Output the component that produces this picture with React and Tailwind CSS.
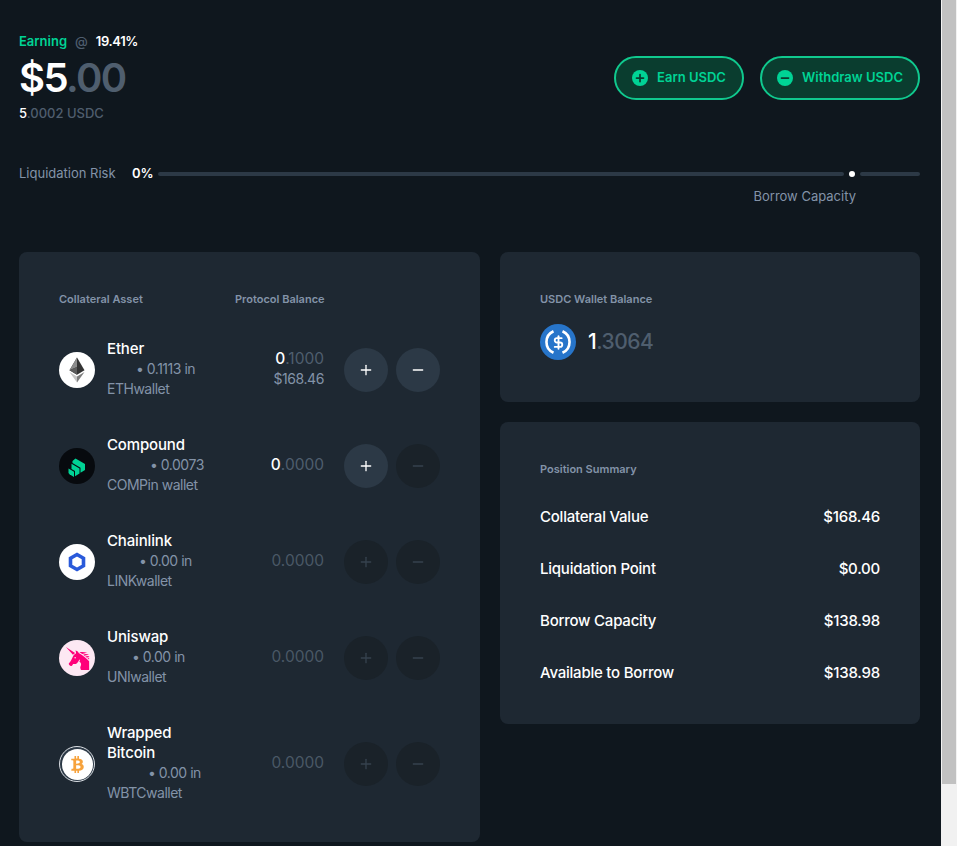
import { Plus, Minus, DollarSign } from 'lucide-react';
import { FaBtc } from 'react-icons/fa';
import { GiUnicorn } from 'react-icons/gi';

function EtherIcon() {
  return (
    <svg viewBox="0 0 36 36" className="h-9 w-9">
      <circle cx="18" cy="18" r="18" fill="#fff" />
      <polygon points="18,5.5 10.5,18.3 18,22.8 25.5,18.3" fill="#343434" />
      <polygon points="18,5.5 10.5,18.3 18,15" fill="#8c8c8c" />
      <polygon points="18,15 10.5,18.3 18,22.8" fill="#5c5c5c" />
      <polygon points="18,24.4 10.5,19.9 18,30.5" fill="#c4c4c4" />
      <polygon points="18,24.4 25.5,19.9 18,30.5" fill="#7d7d7d" />
    </svg>
  );
}

function CompoundIcon() {
  return (
    <svg viewBox="0 0 36 36" className="h-9 w-9">
      <circle cx="18" cy="18" r="18" fill="#070a0e" />
      <g fill="#00d395">
        <polygon points="9.5,20.5 15,23.7 15,29 10.5,26.3 9.5,25" />
        <polygon points="12.5,15.8 20.5,20.5 20.5,25.5 16,28.3 16,23 12.5,21" />
        <polygon points="16.5,10.5 26,16 26,22 21.5,24.8 21.5,19.8 13.5,15 13.5,13" />
      </g>
    </svg>
  );
}

function ChainlinkIcon() {
  return (
    <svg viewBox="0 0 36 36" className="h-9 w-9">
      <circle cx="18" cy="18" r="18" fill="#fff" />
      <polygon points="18,10.5 24.5,14.2 24.5,21.8 18,25.5 11.5,21.8 11.5,14.2" fill="none" stroke="#2a5ada" strokeWidth="3.6" />
    </svg>
  );
}

function UniswapIcon() {
  return (
    <div className="flex h-9 w-9 items-center justify-center rounded-full bg-[#fde8f3]">
      <GiUnicorn className="h-[25px] w-[25px] -scale-x-100 text-[#ff007a]" />
    </div>
  );
}

function WbtcIcon() {
  return (
    <div className="flex h-9 w-9 items-center justify-center rounded-full border border-[#d9dde2] bg-[#2c3946]">
      <div className="flex h-[31px] w-[31px] items-center justify-center rounded-full bg-white">
        <FaBtc className="h-[17px] w-[17px] text-[#f7a23b]" />
      </div>
    </div>
  );
}

function UsdcIcon() {
  return (
    <div className="relative flex h-9 w-9 items-center justify-center rounded-full bg-[#2775ca]">
      <svg viewBox="0 0 36 36" className="absolute inset-0 h-9 w-9" fill="none" stroke="#fff" strokeWidth="2.6">
        <path d="M13.5 7.2a11.8 11.8 0 0 0 0 21.6" />
        <path d="M22.5 7.2a11.8 11.8 0 0 1 0 21.6" />
      </svg>
      <DollarSign className="h-[15px] w-[15px] text-white" strokeWidth={3} />
    </div>
  );
}

function Split({ whole, rest, restClass }) {
  return (
    <>
      <span className="font-medium text-white">{whole}</span>
      <span className={restClass}>{rest}</span>
    </>
  );
}

function RoundButton({ active, children }) {
  return (
    <button className={active
      ? 'flex h-11 w-11 items-center justify-center rounded-full bg-[#2c3946] text-white'
      : 'flex h-11 w-11 items-center justify-center rounded-full bg-[#1a2229] text-[#36424e]'}>
      {children}
    </button>
  );
}

function AssetRow({ icon, name, sub, indent, line3, balance, usd, plus, minus }) {
  return (
    <div className="flex items-center py-[18px]">
      <div className="shrink-0">{icon}</div>
      <div className="-mt-px mb-px ml-3 w-[100px] shrink-0 text-sm leading-5 tracking-[-0.035em] text-[#8393a8]">
        <div className="text-[15px] font-medium tracking-[-0.01em] text-white">{name}</div>
        <div className={`whitespace-nowrap ${indent}`}>• {sub}</div>
        <div className="whitespace-nowrap">{line3}</div>
      </div>
      <div className="-mt-px mb-px w-[117px] text-right text-[15.5px] leading-5">
        {balance}
        {usd && <div className="text-sm tracking-[-0.03em] text-[#8393a8]">{usd}</div>}
      </div>
      <div className="ml-5 flex gap-2">
        <RoundButton active={plus}><Plus className="h-4 w-4" /></RoundButton>
        <RoundButton active={minus}><Minus className="h-4 w-4" /></RoundButton>
      </div>
    </div>
  );
}

function SummaryRow({ label, value }) {
  return (
    <div className="flex h-[52px] items-center justify-between text-[15px] font-medium tracking-[-0.015em] text-white">
      <span>{label}</span>
      <span>{value}</span>
    </div>
  );
}

const zero = <span className="text-[#4a5866]">0.0000</span>;

export default function App() {
  return (
    <div className="flex h-[846px] overflow-hidden font-['Inter',sans-serif]">
      <main className="w-[941px] shrink-0 bg-[#0f171e] pl-[19px] pr-[21px] pt-[34px]">
        {/* Balance header */}
        <div className="flex items-start justify-between">
          <div>
            <div className="flex h-4 items-center text-[13px] font-medium">
              <span className="font-semibold text-[#00d395]">Earning</span>
              <span className="ml-2 text-[#4f5e6e]">@</span>
              <span className="ml-2 font-semibold tracking-[-0.03em] text-white">19.41%</span>
            </div>
            <div className="mt-[4px] text-[40px] font-semibold leading-[48px] tracking-[-0.04em]">
              <span className="text-white">$5</span>
              <span className="text-[#4f5e6e]">.00</span>
            </div>
            <div className="mt-[1px] text-[13px] font-medium leading-5">
              <Split whole="5" rest=".0002 USDC" restClass="text-[#4f5e6e]" />
            </div>
          </div>
          <div className="mt-[22px] flex gap-4">
            <button className="flex h-11 w-[130px] items-center justify-center gap-[9px] rounded-full border-2 border-[#10c98e] bg-[#0a3d2f] text-[13px] font-semibold text-[#00d395]">
              <span className="flex h-4 w-4 items-center justify-center rounded-full bg-[#00d395] text-[#0a3d2f]"><Plus className="h-3 w-3" strokeWidth={3.5} /></span>
              Earn USDC
            </button>
            <button className="flex h-11 w-40 items-center justify-center gap-[9px] rounded-full border-2 border-[#10c98e] bg-[#0a3d2f] text-[13px] font-semibold text-[#00d395]">
              <span className="flex h-4 w-4 items-center justify-center rounded-full bg-[#00d395] text-[#0a3d2f]"><Minus className="h-3 w-3" strokeWidth={3.5} /></span>
              Withdraw USDC
            </button>
          </div>
        </div>

        {/* Liquidation risk */}
        <div className="mt-[41px] flex h-5 items-center text-[13px]">
          <span className="w-[113px] text-[#8393a8]">Liquidation Risk</span>
          <span className="w-[26px] font-semibold text-white">0%</span>
          <div className="h-1 w-[686px] rounded-full bg-[#2c3946]" />
          <div className="mx-[5px] h-[6px] w-[6px] rounded-full bg-white" />
          <div className="h-1 flex-1 rounded-full bg-[#2c3946]" />
        </div>
        <div className="mt-[2px] pr-[64px] text-right text-[13px] leading-5 text-[#8393a8]">Borrow Capacity</div>

        <div className="mt-[46px] flex gap-5">
          {/* Collateral table */}
          <section className="h-[590px] w-[461px] shrink-0 rounded-lg bg-[#1e2832] px-10 pt-10">
            <div className="flex text-[11px] font-semibold leading-[14px] text-[#8393a8]">
              <span className="w-[176px]">Collateral Asset</span>
              <span className="w-[89px] whitespace-nowrap text-right">Protocol Balance</span>
            </div>
            <div className="mt-[16px]">
              <AssetRow icon={<EtherIcon />} name="Ether" sub="0.1113 in" indent="pl-[29px]" line3="ETHwallet"
                balance={<Split whole="0" rest=".1000" restClass="text-[#4f5e6e]" />} usd="$168.46" plus minus />
              <AssetRow icon={<CompoundIcon />} name="Compound" sub="0.0073" indent="pl-[43px]" line3="COMPin wallet"
                balance={<Split whole="0" rest=".0000" restClass="text-[#4f5e6e]" />} plus />
              <AssetRow icon={<ChainlinkIcon />} name="Chainlink" sub="0.00 in" indent="pl-[32px]" line3="LINKwallet" balance={zero} />
              <AssetRow icon={<UniswapIcon />} name="Uniswap" sub="0.00 in" indent="pl-[25px]" line3="UNIwallet" balance={zero} />
              <AssetRow icon={<WbtcIcon />} name="Wrapped Bitcoin" sub="0.00 in" indent="pl-[41px]" line3="WBTCwallet" balance={zero} />
            </div>
          </section>

          <div className="flex flex-1 flex-col gap-5">
            {/* Wallet balance */}
            <section className="h-[150px] rounded-lg bg-[#1e2832] px-10 pt-10">
              <div className="text-[11px] font-semibold leading-[14px] text-[#8393a8]">USDC Wallet Balance</div>
              <div className="mt-[18px] flex items-center gap-3">
                <UsdcIcon />
                <div className="text-[21px] font-medium tracking-[-0.025em]">
                  <Split whole="1" rest=".3064" restClass="text-[#4f5e6e]" />
                </div>
              </div>
            </section>

            {/* Position summary */}
            <section className="h-[302px] rounded-lg bg-[#1e2832] px-10 pt-10">
              <div className="text-[11px] font-semibold leading-[14px] text-[#8393a8]">Position Summary</div>
              <div className="mt-[15px]">
                <SummaryRow label="Collateral Value" value="$168.46" />
                <SummaryRow label="Liquidation Point" value="$0.00" />
                <SummaryRow label="Borrow Capacity" value="$138.98" />
                <SummaryRow label="Available to Borrow" value="$138.98" />
              </div>
            </section>
          </div>
        </div>
      </main>

      {/* Browser scrollbar */}
      <aside className="flex-1 bg-[#f1f1f1] px-px">
        <div className="h-[784px] w-[14px] bg-[#c1c1c1]" />
      </aside>
    </div>
  );
}
